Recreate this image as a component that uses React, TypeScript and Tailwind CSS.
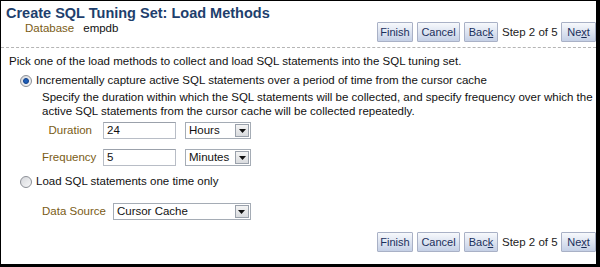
import React from 'react';

const font = { fontFamily: '"Liberation Sans", Arial, sans-serif' };

function Btn({ children, width }: { children: React.ReactNode; width: string }) {
  return (
    <button className={`${width} h-[20px] text-[11px] leading-none text-[#1b2f5c] border border-[#a9b1c6] bg-gradient-to-b from-[#f7f9fc] to-[#c5d0e6] rounded-[1px] flex items-center justify-center whitespace-nowrap`}>
      {children}
    </button>
  );
}

function Nav() {
  return (
    <div className="flex items-center gap-[4px]">
      <Btn width="w-[36px]">Finish</Btn>
      <Btn width="w-[43px]">Cancel</Btn>
      <Btn width="w-[34px]">
        Bac<span className="underline">k</span>
      </Btn>
      <span className="w-[54px] whitespace-nowrap text-center text-[11.5px] text-[#222] mr-[1px]">Step 2 of 5</span>
      <Btn width="w-[35px]">
        Ne<span className="underline">x</span>t
      </Btn>
    </div>
  );
}

function Radio({ checked }: { checked?: boolean }) {
  return (
    <span className="w-[12px] h-[12px] rounded-full border border-[#8c8f96] bg-gradient-to-br from-[#d6d8dc] to-[#f7f7f8] flex items-center justify-center shrink-0">
      {checked && <span className="w-[6px] h-[6px] rounded-full bg-[#1f5fb8] border border-[#10408a]" />}
    </span>
  );
}

function Select({ value, width }: { value: string; width: string }) {
  return (
    <div className={`h-[17px] ${width} border border-[#a5acb5] bg-white flex items-center justify-between pl-[3px] pr-[1px]`}>
      <span className="text-[11.5px] text-[#111]">{value}</span>
      <span className="w-[14px] h-[13px] border border-[#9aa1ab] bg-gradient-to-b from-[#f4f4f4] to-[#d9dbde] flex items-center justify-center">
        <svg width="7" height="4" viewBox="0 0 7 4"><path d="M0 0h7L3.5 4z" fill="#111" /></svg>
      </span>
    </div>
  );
}

function Input({ value }: { value: string }) {
  return (
    <div className="h-[17px] w-[73px] border border-[#b8bdc6] border-t-[#9ba1ab] bg-white flex items-center pl-[3px]">
      <span className="text-[11.5px] text-[#111]">{value}</span>
    </div>
  );
}

export default function App() {
  return (
    <div style={font} className="w-[600px] h-[267px] bg-white border-l border-t border-black border-r-[4px] border-b-[3px] flex flex-col text-[11.5px] leading-[13px] text-[#111]">
      <div className="flex justify-between items-start">
        <div className="pl-[5px] pt-[3px]">
          <h1 className="text-[14.5px] font-bold text-[#1e3f6d] leading-[18px]">Create SQL Tuning Set: Load Methods</h1>
          <div className="flex gap-[9px] pl-[19px] leading-[12px]">
            <span className="text-[#7a5c16]">Database</span>
            <span>empdb</span>
          </div>
        </div>
        <div className="mt-[21px]">
          <Nav />
        </div>
      </div>
      <div className="mt-[5px] border-t border-dashed border-[#b5b5b5]" />

      <p className="pl-[8px] mt-[7px]">Pick one of the load methods to collect and load SQL statements into the SQL tuning set.</p>

      <div className="flex items-center gap-[4px] pl-[19px] mt-[6px]">
        <Radio checked />
        <span>Incrementally capture active SQL statements over a period of time from the cursor cache</span>
      </div>
      <p className="pl-[41px] mt-[3px] leading-[14px]">
        Specify the duration within which the SQL statements will be collected, and specify frequency over which the active SQL statements from the cursor cache will be collected repeatedly.
      </p>

      <div className="grid grid-cols-[61px_82px_auto] items-center gap-y-[10px] mt-[4px] pl-[41px]">
        <span className="text-[#7a5c16] text-right pr-[11px]">Duration</span>
        <Input value="24" />
        <Select value="Hours" width="w-[66px]" />
        <span className="text-[#7a5c16] text-right pr-[11px]">Frequency</span>
        <Input value="5" />
        <Select value="Minutes" width="w-[66px]" />
      </div>

      <div className="flex items-center gap-[4px] pl-[19px] mt-[9px]">
        <Radio />
        <span>Load SQL statements one time only</span>
      </div>

      <div className="flex items-center gap-[7px] pl-[41px] mt-[15px]">
        <span className="text-[#7a5c16]">Data Source</span>
        <Select value="Cursor Cache" width="w-[138px]" />
      </div>

      <div className="flex justify-end mt-auto mb-[12px]">
        <Nav />
      </div>
    </div>
  );
}
